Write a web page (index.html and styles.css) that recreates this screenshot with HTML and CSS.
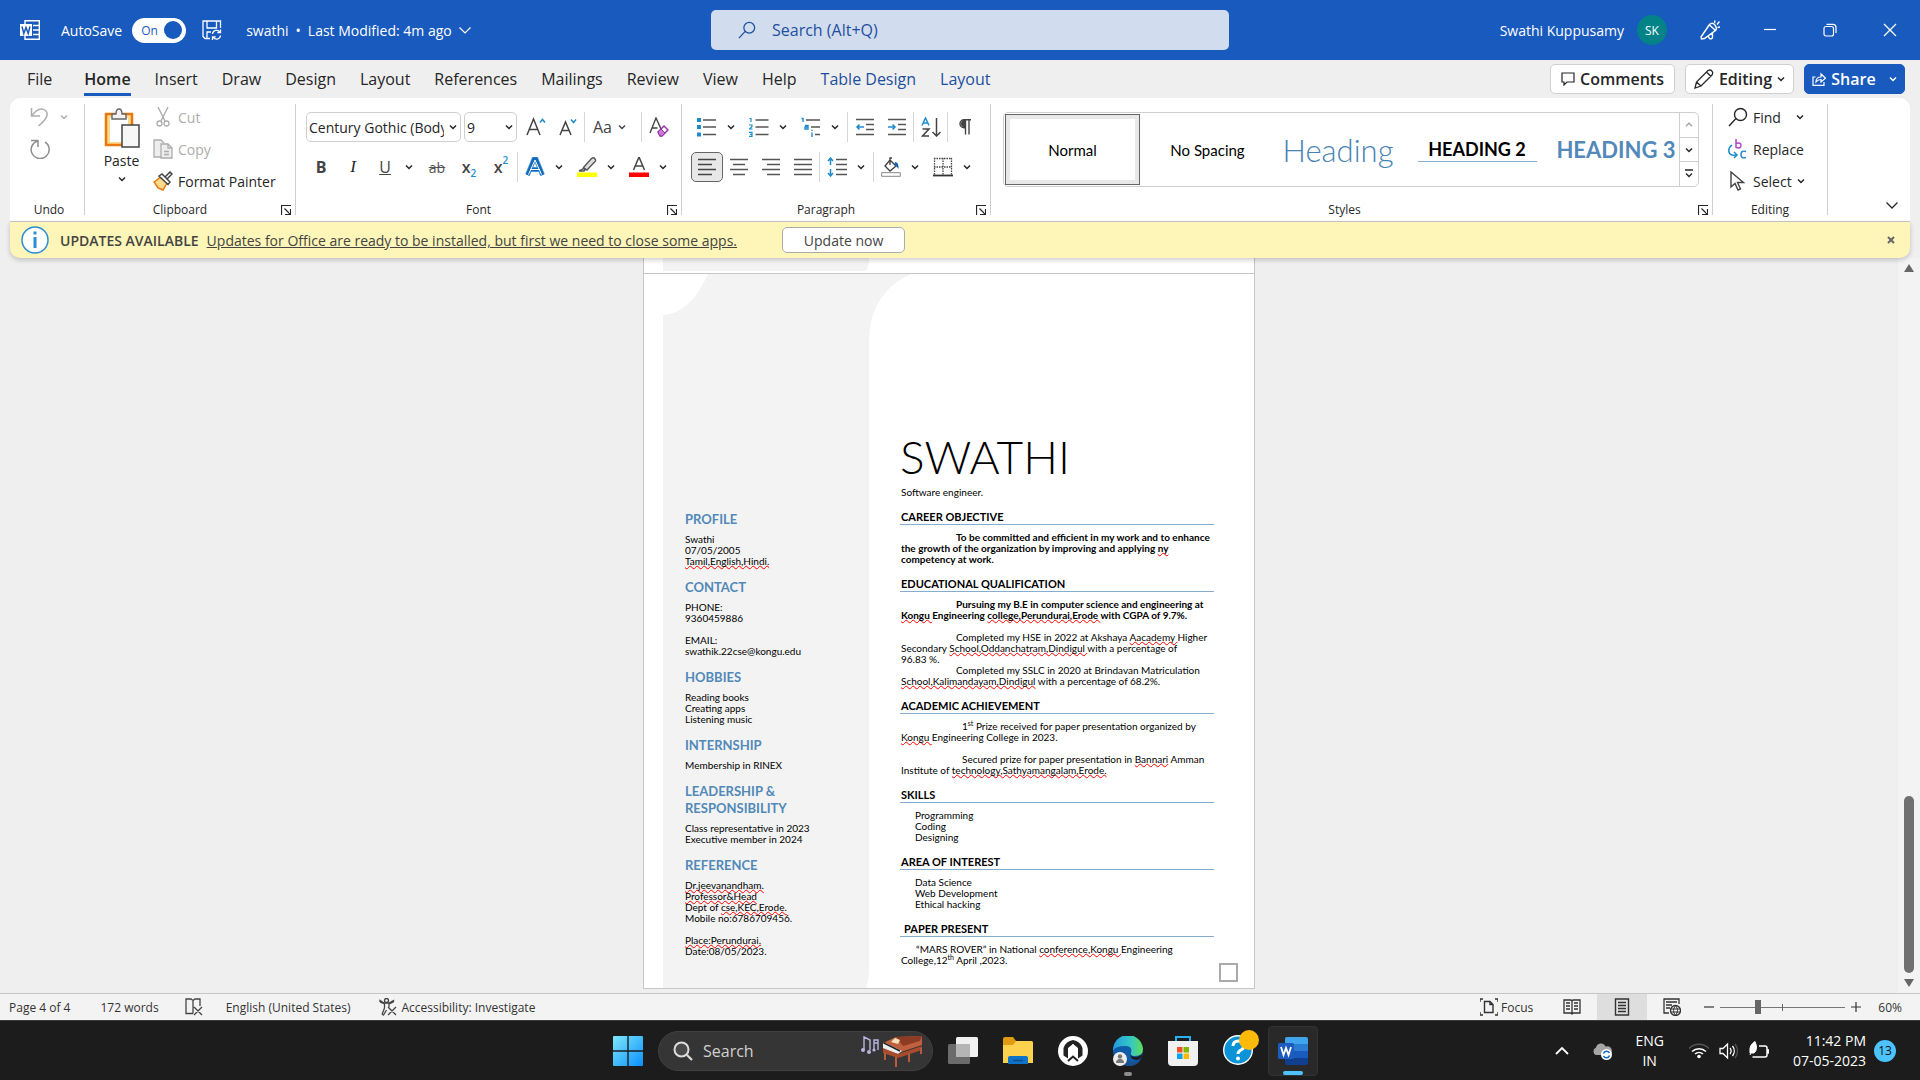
FILE: index.html
```html
<!DOCTYPE html>
<html lang="en">
<head>
<meta charset="utf-8">
<title>swathi - Word</title>
<link rel="stylesheet" href="styles.css">
</head>
<body>
<svg class="defs" aria-hidden="true">
  <symbol id="chev" viewBox="0 0 8 8"><path d="M1 2.5l3 3 3-3" fill="none" stroke="currentColor" stroke-width="1.5"/></symbol>
  <symbol id="launch" viewBox="0 0 10 10"><path d="M.5 10V.5H10M3.5 3.500l5.500 5.500M9.500 4v5.500H4" fill="none" stroke="currentColor" stroke-width="1.200"/></symbol>
  <symbol id="lens" viewBox="0 0 20 20"><path d="M1 19l7-7.500" fill="none" stroke="currentColor" stroke-width="1.400"/><circle cx="12.500" cy="7.500" r="6" fill="none" stroke="currentColor" stroke-width="1.400"/></symbol>
</svg>

<header class="titlebar">
  <div class="title-left">
    <svg class="i20" viewBox="0 0 20 20"><path d="M5 4V.7h14.300v18.600H5V16M13 5.500h6M13 10h6M13 14.500h6" fill="none" stroke="#fff" stroke-width="1.400"/><path d="M0 4h12v12H0z" fill="#fff"/><path d="M2 6.500l1.800 7L6 7.500l2.200 6 1.800-7" fill="none" stroke="#185abd" stroke-width="1.500"/></svg>
    <label class="autosave">AutoSave
      <span class="toggle"><input type="checkbox" role="switch" checked><span class="knob">On</span></span>
    </label>
    <button class="plain save" aria-label="Save"><svg class="i20" viewBox="0 0 20 20"><path d="M8 18.500H3L1 16.500V1h17.500v7M5 1v7h9.500V1M5 18v-6h4" fill="none" stroke="#fff" stroke-width="1.300"/><path d="M10.500 14a4 4 0 0 1 7.500-1.500M18.500 9.500v3.200h-3.200M18.500 15.500a4 4 0 0 1-7.500 1.500M10.500 20v-3.200h3.200" fill="none" stroke="#fff" stroke-width="1.300"/></svg></button>
    <button class="plain docname"><span>swathi</span><span>•</span><span>Last Modified: 4m ago</span><svg class="i12" viewBox="0 0 12 12"><path d="M.5 3.500L6 9l5.500-5.500" fill="none" stroke="#fff" stroke-width="1.200"/></svg></button>
  </div>
  <label class="searchbox"><svg class="i18"><use href="#lens"/></svg><input type="search" placeholder="Search (Alt+Q)" aria-label="Search"></label>
  <div class="title-right">
    <span>Swathi Kuppusamy</span>
    <span class="avatar">SK</span>
    <button class="plain win" aria-label="Coming soon"><svg class="i20" viewBox="0 0 20 20"><path d="M1 17L9.500 4.500Q12 2 14.500 4.500T16 10L4.500 18.500 1.500 19zM9.500 5l6.500 6M8 16l1.500 2.500q2.500 1 3-1V13M14.500 3l.5-2.500M17 4.500l2.500-3M17.500 7.500l2.500-.5" fill="none" stroke="#fff" stroke-width="1.400"/></svg></button>
    <button class="plain win" aria-label="Minimize"><svg class="i14" viewBox="0 0 14 14"><path d="M1 6.500h12" stroke="#fff" stroke-width="1.200"/></svg></button>
    <button class="plain win" aria-label="Restore"><svg class="i14" viewBox="0 0 14 14"><rect x="1" y="3.500" width="9.500" height="9.500" rx="2" fill="none" stroke="#fff" stroke-width="1.200"/><path d="M3.500 1.300H10a3 3 0 0 1 3 3V10" fill="none" stroke="#fff" stroke-width="1.200"/></svg></button>
    <button class="plain win" aria-label="Close"><svg class="i14" viewBox="0 0 14 14"><path d="M1 1l12 12M13 1L1 13" stroke="#fff" stroke-width="1.300"/></svg></button>
  </div>
</header>

<nav class="tabs">
  <a class="file" href="#">File</a><a class="active" href="#">Home</a><a href="#">Insert</a><a href="#">Draw</a><a href="#">Design</a><a href="#">Layout</a><a href="#">References</a><a href="#">Mailings</a><a href="#">Review</a><a href="#">View</a><a href="#">Help</a><a class="ctx" href="#">Table Design</a><a class="ctx" href="#">Layout</a>
  <div class="tab-actions">
    <button class="pill comments"><svg class="i14" viewBox="0 0 14 14"><path d="M1 1h12v9H6l-3 3v-3H1z" fill="none" stroke="currentColor" stroke-width="1.200"/></svg>Comments</button>
    <button class="pill editing"><svg class="i20" viewBox="0 0 20 20"><path d="M1 19l1.500-6L14 1.500q3-1.500 4.500 1.500.5 1.500-.5 3L7 17zM12.500 3l4.500 4.500M2.500 13L7 17" fill="none" stroke="currentColor" stroke-width="1.300"/></svg>Editing<svg class="i8"><use href="#chev"/></svg></button>
    <button class="pill share"><svg class="i14" viewBox="0 0 14 14"><path d="M3.500 5H1v8.300h11V10" fill="none" stroke="currentColor" stroke-width="1.200"/><path d="M4 10q0-5 5-5V2l4.500 4.200L9 10V7.500q-3 0-5 2.500z" fill="none" stroke="currentColor" stroke-width="1.200"/></svg>Share<svg class="i8"><use href="#chev"/></svg></button>
  </div>
</nav>

<section class="ribbon">
  <div class="group undo">
    <div class="stack">
      <div class="srow off"><button class="plain" aria-label="Undo"><svg class="i20" viewBox="0 0 20 20"><path d="M1.500 1v8H10M2 8.500Q9-1 15.500 3.500q5.500 5-7 15.500" fill="none" stroke="currentColor" stroke-width="1.500"/></svg></button><svg class="i8"><use href="#chev"/></svg></div>
      <div class="srow redo"><button class="plain" aria-label="Repeat"><svg class="i20" viewBox="0 0 20 20"><path d="M1 1.500h7V8M7.500 2A9 9 0 1 0 15 3" fill="none" stroke="currentColor" stroke-width="1.500"/></svg></button></div>
    </div>
    <div class="foot"><span>Undo</span></div>
  </div>
  <div class="group clip">
    <div class="cols">
      <button class="plain paste"><svg class="pasteicon" viewBox="0 0 36 40"><path d="M2 6h26v31H2z" fill="#fbd98d" stroke="#e8780c" stroke-width="2.500"/><path d="M6 10h18v24H6z" fill="#fff"/><path d="M8 6h4q0-5 3-5t3 5h4v5H8z" fill="#f3f3f3" stroke="#666" stroke-width="1.400"/><path d="M18 17h17v22H18z" fill="#f7f7f7" stroke="#444" stroke-width="1.500"/></svg>Paste<svg class="i8"><use href="#chev"/></svg></button>
      <div class="stack">
        <button class="plain srow off"><svg class="i20" viewBox="0 0 20 20"><path d="M5 0l7 14M15 0L8 14" fill="none" stroke="currentColor" stroke-width="1.400"/><circle cx="6.500" cy="16.500" r="2.500" fill="none" stroke="currentColor" stroke-width="1.300"/><circle cx="13.500" cy="16.500" r="2.500" fill="none" stroke="currentColor" stroke-width="1.300"/></svg>Cut</button>
        <button class="plain srow off"><svg class="i20" viewBox="0 0 20 20"><path d="M8 18H1V1h7l3 3" fill="#eee" stroke="currentColor" stroke-width="1.300"/><path d="M8 5h7l4 4v10H8zM15 5v4h4M11 12.500h5M11 15.500h5" fill="#eee" stroke="currentColor" stroke-width="1.300"/></svg>Copy</button>
        <button class="plain srow"><svg class="i20" viewBox="0 0 20 20"><path d="M1 11l7-5 6 6-4 7-5-2z" fill="#fbd98d" stroke="#e8780c" stroke-width="1.500"/><path d="M6 5l3-2 8 8-2 2.500zM12 6l5-5 2 2-5 5" fill="#fff" stroke="#444" stroke-width="1.500"/></svg>Format Painter</button>
      </div>
    </div>
    <div class="foot"><span>Clipboard</span><button class="plain" aria-label="Clipboard options"><svg class="i10"><use href="#launch"/></svg></button></div>
  </div>
  <div class="group font">
    <div class="row">
      <span class="combo name"><select aria-label="Font"><option>Century Gothic (Body)</option></select><svg class="i8"><use href="#chev"/></svg></span>
      <span class="combo size"><select aria-label="Font size"><option>9</option></select><svg class="i8"><use href="#chev"/></svg></span>
      <button class="plain ib" aria-label="Grow font"><svg class="i20" viewBox="0 0 20 20"><path d="M1 18L7.500 2 14 18M3.500 12.500h8" fill="none" stroke="#444" stroke-width="1.500"/><path d="M14 5.500l2.500-3 2.500 3" fill="none" stroke="#1e8bcd" stroke-width="1.500"/></svg></button>
      <button class="plain ib" aria-label="Shrink font"><svg class="i20" viewBox="0 0 20 20"><path d="M2 18L7.500 5 13 18M4 13.500h7" fill="none" stroke="#444" stroke-width="1.500"/><path d="M13 2.500l2.500 3 2.500-3" fill="none" stroke="#1e8bcd" stroke-width="1.500"/></svg></button>
      <i class="sep"></i>
      <button class="plain aa">Aa<svg class="i8"><use href="#chev"/></svg></button>
      <i class="sep"></i>
      <button class="plain ib" aria-label="Clear formatting"><svg class="i20" viewBox="0 0 20 20"><path d="M1 16L7 1l5 11M3.500 11h5" fill="none" stroke="#444" stroke-width="1.400"/><path d="M9 15l6-6 4 4-6 6h-2z" fill="#fff" stroke="#9b2fae" stroke-width="1.500"/><path d="M9 15l3-3 4 4-3 3h-2z" fill="#c57fd0" stroke="#9b2fae"/></svg></button>
    </div>
    <div class="row">
      <button class="plain ib b">B</button><button class="plain ib it">I</button><button class="plain ib un">U</button><svg class="ch"><use href="#chev"/></svg>
      <button class="plain ib st">ab</button><button class="plain ib x">x<sub>2</sub></button><button class="plain ib x">x<sup>2</sup></button>
      <i class="sep"></i>
      <button class="plain ib" aria-label="Text effects"><svg class="i20" viewBox="0 0 20 20"><path d="M2.500 18L9 2h2l6.500 16M5 12.500h10" fill="none" stroke="#5ba6e0" stroke-width="5"/><path d="M2.500 18L9 2h2l6.500 16M5 12.500h10" fill="none" stroke="#1468b8" stroke-width="3.500"/><path d="M3.500 17.500L10 3l6.500 14.500M5 12.500h10" fill="none" stroke="#fff" stroke-width="1"/></svg></button><svg class="ch"><use href="#chev"/></svg>
      <button class="plain ib" aria-label="Highlight"><svg class="i20" viewBox="0 0 20 20"><path d="M0 15.500h20V20H0z" fill="#ff0"/><path d="M4 13l2.500-1.500L8 13l-1 1H2zM6.500 10.500L14.500 1.500q2-1.500 3.500.5t-.5 3L10 13z" fill="#ddd" stroke="#555" stroke-width="1.400"/></svg></button><svg class="ch"><use href="#chev"/></svg>
      <button class="plain ib" aria-label="Font color"><svg class="i20" viewBox="0 0 20 20"><path d="M0 15.500h20V20H0z" fill="red"/><path d="M4.500 13L10 0l5.500 13M6.500 9h7" fill="none" stroke="#444" stroke-width="1.500"/></svg></button><svg class="ch"><use href="#chev"/></svg>
    </div>
    <div class="foot"><span>Font</span><button class="plain" aria-label="Font options"><svg class="i10"><use href="#launch"/></svg></button></div>
  </div>
  <div class="group para">
    <div class="row">
      <button class="plain ib" aria-label="Bullets"><svg class="i20" viewBox="0 0 20 20"><path d="M6 3h13M6 10h13M6 17.500h13" stroke="#555" stroke-width="1.600"/><path d="M0 1h4v4H0zM0 8h4v4H0zM0 15.500h4v4H0z" fill="#1e8bcd"/></svg></button><svg class="ch"><use href="#chev"/></svg>
      <button class="plain ib" aria-label="Numbering"><svg class="i20" viewBox="0 0 20 20"><path d="M6.500 3h13M6.500 10h13M6.500 17.500h13" stroke="#555" stroke-width="1.600"/><path d="M.5 1.500H2V5M0 8h3v1.500L.5 12h3M0 15.300h3v4H0M1 17.300h2" fill="none" stroke="#1e8bcd" stroke-width="1.200"/></svg></button><svg class="ch"><use href="#chev"/></svg>
      <button class="plain ib" aria-label="Multilevel list"><svg class="i20" viewBox="0 0 20 20"><path d="M5 3h14M10 10h9M14 17.500h5" stroke="#555" stroke-width="1.600"/><path d="M.5 1.500H2V5M4 8.500h3V12H4v-2h3M11 15.500V20M11 12.800v1.200" fill="none" stroke="#1e8bcd" stroke-width="1.400"/></svg></button><svg class="ch"><use href="#chev"/></svg>
      <i class="sep"></i>
      <button class="plain ib" aria-label="Decrease indent"><svg class="i20" viewBox="0 0 20 20"><path d="M1 2.500h18M11 7.500h8M11 12.500h8M1 17.500h18" stroke="#555" stroke-width="1.500"/><path d="M9 10H2M4.500 7.500L2 10l2.500 2.500" fill="none" stroke="#1e8bcd" stroke-width="1.500"/></svg></button><button class="plain ib" aria-label="Increase indent"><svg class="i20" viewBox="0 0 20 20"><path d="M1 2.500h18M11 7.500h8M11 12.500h8M1 17.500h18" stroke="#555" stroke-width="1.500"/><path d="M1 10h7M5.500 7.500L8 10l-2.500 2.500" fill="none" stroke="#1e8bcd" stroke-width="1.500"/></svg></button>
      <i class="sep"></i>
      <button class="plain ib" aria-label="Sort"><svg class="i20" viewBox="0 0 20 20"><path d="M1 8.500L4.500 1 8 8.500M2.500 6h4" fill="none" stroke="#1e8bcd" stroke-width="1.500"/><path d="M1.500 12H8l-6.500 7H8" fill="none" stroke="#444" stroke-width="1.500"/><path d="M15.500 1v18M11.500 15l4 4 4-4" fill="none" stroke="#444" stroke-width="1.500"/></svg></button>
      <i class="sep"></i>
      <button class="plain ib" aria-label="Show marks"><svg class="i20" viewBox="0 0 20 20"><path d="M16 2.700H9a4 4 0 0 0 0 8h1.500M10.500 3v14.500M14 3v14.500" fill="none" stroke="#444" stroke-width="1.400"/><path d="M10 3H8.500a4 4 0 0 0 0 7.500H10z" fill="#444"/></svg></button>
    </div>
    <div class="row">
      <button class="plain ib pressed" aria-label="Align left"><svg class="i20" viewBox="0 0 20 20"><path d="M1 2.500h18M1 7.500h14M1 12.500h18M1 17.500h14" stroke="#444" stroke-width="1.500"/></svg></button><button class="plain ib" aria-label="Center"><svg class="i20" viewBox="0 0 20 20"><path d="M1 2.500h18M4 7.500h12M1 12.500h18M4 17.500h12" stroke="#555" stroke-width="1.500"/></svg></button><button class="plain ib" aria-label="Align right"><svg class="i20" viewBox="0 0 20 20"><path d="M1 2.500h18M6 7.500h13M1 12.500h18M6 17.500h13" stroke="#555" stroke-width="1.500"/></svg></button><button class="plain ib" aria-label="Justify"><svg class="i20" viewBox="0 0 20 20"><path d="M1 2.500h18M1 7.500h18M1 12.500h18M1 17.500h18" stroke="#555" stroke-width="1.500"/></svg></button>
      <i class="sep"></i>
      <button class="plain ib" aria-label="Line spacing"><svg class="i20" viewBox="0 0 20 20"><path d="M9 2.500h11M9 7.500h11M9 12.500h11M9 17.500h11" stroke="#555" stroke-width="1.500"/><path d="M3.500 1v7M1 4l2.500-3L6 4M3.500 12v7M1 16l2.500 3L6 16" fill="none" stroke="#1e8bcd" stroke-width="1.500"/></svg></button><svg class="ch"><use href="#chev"/></svg>
      <i class="sep"></i>
      <button class="plain ib" aria-label="Shading"><svg class="i20" viewBox="0 0 20 20"><path d="M.7 15.700h18.600v3.600H.7z" fill="#fff" stroke="#888"/><path d="M9 3l6 6-6 5-5-5zM9 8V1h2" fill="#fff" stroke="#444" stroke-width="1.400"/><path d="M14 5q4 0 3.500 7-2-3-4-4z" fill="#1468b8"/></svg></button><svg class="ch"><use href="#chev"/></svg>
      <button class="plain ib" aria-label="Borders"><svg class="i20" viewBox="0 0 20 20"><path d="M1 1.500h18M1 10h18M1.500 1v17M10 1v17M18.500 1v17" fill="none" stroke="#444" stroke-width="1.300" stroke-dasharray="1.500 1"/><path d="M0 18.500h20" stroke="#333" stroke-width="1.800"/></svg></button><svg class="ch"><use href="#chev"/></svg>
    </div>
    <div class="foot"><span>Paragraph</span><button class="plain" aria-label="Paragraph options"><svg class="i10"><use href="#launch"/></svg></button></div>
  </div>
  <div class="group styles">
    <div class="gallery">
      <button class="plain s-normal">Normal</button>
      <button class="plain s-nosp">No Spacing</button>
      <button class="plain s-h1">Heading</button>
      <button class="plain s-h2"><span>HEADING 2</span></button>
      <button class="plain s-h3">HEADING 3</button>
      <div class="gscroll">
        <button class="plain up" aria-label="Up"><svg class="i8"><use href="#chev"/></svg></button>
        <button class="plain" aria-label="Down"><svg class="i8"><use href="#chev"/></svg></button>
        <button class="plain" aria-label="More"><svg class="i10" viewBox="0 0 10 10"><path d="M1 1h8M2 4.500l3 3 3-3" fill="none" stroke="currentColor" stroke-width="1.400"/></svg></button>
      </div>
    </div>
    <div class="foot"><span>Styles</span><button class="plain" aria-label="Styles options"><svg class="i10"><use href="#launch"/></svg></button></div>
  </div>
  <div class="group edit">
    <div class="stack">
      <button class="plain srow"><svg class="i20"><use href="#lens"/></svg>Find<svg class="i8 far"><use href="#chev"/></svg></button>
      <button class="plain srow"><svg class="i20" viewBox="0 0 20 20"><path d="M8 0v9M8 4.500q5-1.500 5 2t-5 2" fill="none" stroke="#b146c2" stroke-width="1.500"/><path d="M18 12.500q-5-1.500-5 3t5 3M4 6q-4 3-3 7 1 4 7 3M6 13l3 3-3 3" fill="none" stroke="#1e8bcd" stroke-width="1.500"/></svg>Replace</button>
      <button class="plain srow"><svg class="i20" viewBox="0 0 20 20"><path d="M3 1v15l4-3.500 3 6.500 2.500-1.200-3-6.300h6z" fill="#fff" stroke="#444" stroke-width="1.400"/></svg>Select<svg class="i8"><use href="#chev"/></svg></button>
    </div>
    <div class="foot"><span>Editing</span></div>
  </div>
  <button class="plain collapse" aria-label="Collapse ribbon"><svg class="i12" viewBox="0 0 12 12"><path d="M.5 3.500L6 9l5.500-5.500" fill="none" stroke="currentColor" stroke-width="1.300"/></svg></button>
</section>

<div class="update">
  <svg class="info" viewBox="0 0 28 28"><circle cx="14" cy="14" r="13" fill="#fff" stroke="#2a8dd4" stroke-width="1.500"/><path d="M14 11v11" stroke="#2a8dd4" stroke-width="3"/><path d="M14 5.500v3" stroke="#2a8dd4" stroke-width="3"/></svg>
  <strong>UPDATES AVAILABLE</strong>
  <a href="#">Updates for Office are ready to be installed, but first we need to close some apps.</a>
  <button class="upd">Update now</button>
  <button class="plain x-close" aria-label="Dismiss"><svg class="i8" viewBox="0 0 8 8"><path d="M1 1l6 6M7 1L1 7" stroke="#666" stroke-width="2"/></svg></button>
</div>

<main class="canvas">
  <div class="pages">
    <div class="prev"><div class="prev-side"></div></div>
    <article class="page">
      <svg class="shape" viewBox="0 0 248 714" aria-hidden="true"><path d="M45 0Q27 40 0 41V714H203Q206 706 206 698V64Q208 18 248 0Z" fill="#f3f3f3"/></svg>
      <aside class="side">
        <h2>PROFILE</h2>
        <p>Swathi<br>07/05/2005<br><u>Tamil,English,Hindi.</u></p>
        <h2>CONTACT</h2>
        <p>PHONE:<br>9360459886<br><br>EMAIL:<br>swathik.22cse@kongu.edu</p>
        <h2>HOBBIES</h2>
        <p>Reading books<br>Creating apps<br>Listening music</p>
        <h2>INTERNSHIP</h2>
        <p>Membership in RINEX</p>
        <h2>LEADERSHIP &amp;<br>RESPONSIBILITY</h2>
        <p>Class representative in 2023<br>Executive member in 2024</p>
        <h2>REFERENCE</h2>
        <p><u>Dr.jeevanandham.</u><br><u>Professor&amp;Head</u><br>Dept of <u>cse,KEC,Erode.</u><br>Mobile no:6786709456.<br><br><u>Place:Perundurai.</u><br>Date:08/05/2023.</p>
      </aside>
      <div class="body">
        <h1>SWATHI</h1>
        <p class="role">Software engineer.</p>
        <h3>CAREER OBJECTIVE</h3>
        <p class="ind bold">To be committed and efficient in my work and to enhance<br>the growth of the organization by improving and applying <u>ny </u><br>competency at work.</p>
        <h3>EDUCATIONAL QUALIFICATION</h3>
        <div class="txt">
          <p class="ind bold">Pursuing my B.E in computer science and engineering at<br><u>Kongu </u>Engineering <u>college,Perundurai,Erode </u>with CGPA of 9.7%.<br><br></p>
          <p class="ind">Completed my HSE in 2022 at Akshaya <u>Aacademy </u>Higher<br>Secondary <u>School,Oddanchatram,Dindigul </u>with a percentage of<br>96.83 %.</p>
          <p class="ind">Completed my SSLC in 2020 at Brindavan Matriculation<br><u>School,Kalimandayam,Dindigul</u> with a percentage of 68.2%.</p>
        </div>
        <h3>ACADEMIC ACHIEVEMENT</h3>
        <div class="txt">
          <p class="ind more">1<sup>st</sup> Prize received for paper presentation organized by<br><u>Kongu </u>Engineering College in 2023.<br><br></p>
          <p class="ind more">Secured prize for paper presentation in <u>Bannari</u> Amman<br>Institute of <u>technology,Sathyamangalam,Erode.</u></p>
        </div>
        <h3>SKILLS</h3>
        <p class="in">Programming<br>Coding<br>Designing</p>
        <h3>AREA OF INTEREST</h3>
        <p class="in">Data Science<br>Web Development<br>Ethical hacking</p>
        <h3 class="sp">PAPER PRESENT</h3>
        <p class="first">“MARS ROVER” in National <u>conference,Kongu </u>Engineering<br>College,12<sup>th</sup> April ,2023.</p>
      </div>
      <span class="handle"></span>
    </article>
  </div>
  <div class="scroll">
    <svg class="arrow" viewBox="0 0 12 10"><path d="M6 1l5 8H1z" fill="#666"/></svg>
    <span class="thumb"></span>
    <svg class="arrow" viewBox="0 0 12 10"><path d="M6 9l5-8H1z" fill="#666"/></svg>
  </div>
</main>

<footer class="status">
  <span>Page 4 of 4</span><span class="wd">172 words</span>
  <svg class="i18 proof" viewBox="0 0 18 18"><path d="M8 15.500H1V1h5l2 1.500L10 1h5v7M8 2.500v13M9 9l8 8M17 9l-8 8" fill="none" stroke="#444" stroke-width="1.300"/></svg>
  <span class="lang">English (United States)</span>
  <svg class="i18" viewBox="0 0 18 18"><circle cx="7.500" cy="2.500" r="2" fill="none" stroke="#444" stroke-width="1.300"/><path d="M1 4l4.500 2v4L3 16.500M14.500 4L10 6v3M3 16.500l1.500.5L7.500 12M9 9l8 8M17 9l-8 8M1 4V2.500L5 5h5l4.500-2.500V4" fill="none" stroke="#444" stroke-width="1.300"/></svg>
  <span class="acc">Accessibility: Investigate</span>
  <div class="views">
    <button class="plain focus"><svg class="i18" viewBox="0 0 18 18"><path d="M0 4V1h3M15 1h3v3M0 14v3h3M15 17h3v-3M4.500 3.500H10l3 3v8H4.500zM10 3.500v3h3" fill="none" stroke="#333" stroke-width="1.400"/></svg>Focus</button>
    <button class="plain view" aria-label="Read mode"><svg class="i18" viewBox="0 0 18 18"><path d="M1 2h7l1 1 1-1h7v13h-7l-1 1-1-1H1zM9 3v13M3 5h4M3 8h4M3 11h4M11 5h4M11 8h4M11 11h4" fill="none" stroke="#333" stroke-width="1.300"/></svg></button>
    <button class="plain view on" aria-label="Print layout"><svg class="i18" viewBox="0 0 18 18"><path d="M2.500 1h13v16h-13zM5 4.500h8M5 7.500h8M5 10.500h8M5 13.500h8" fill="none" stroke="#333" stroke-width="1.400"/></svg></button>
    <button class="plain view" aria-label="Web layout"><svg class="i18" viewBox="0 0 18 18"><path d="M6 15H1V1h15v5M3 4h11M3 7h6M3 10h4" fill="none" stroke="#333" stroke-width="1.300"/><circle cx="12.500" cy="12.500" r="5" fill="#f3f3f3" stroke="#333" stroke-width="1.300"/><path d="M7.500 11h10M7.500 14h10M12.500 7.500q-4 5 0 10M12.500 7.500q4 5 0 10" fill="none" stroke="#333"/></svg></button>
    <button class="plain zoomb" aria-label="Zoom out"><svg class="i10" viewBox="0 0 10 10"><path d="M0 5h10" stroke="#333" stroke-width="1.200"/></svg></button>
    <input class="zoom" type="range" min="10" max="190" value="63" aria-label="Zoom">
    <button class="plain zoomb" aria-label="Zoom in"><svg class="i10" viewBox="0 0 10 10"><path d="M0 5h10M5 0v10" stroke="#333" stroke-width="1.200"/></svg></button>
    <span class="pct">60%</span>
  </div>
</footer>

<div class="taskbar">
  <div class="apps">
    <button class="plain app" aria-label="Start"><svg class="i30" viewBox="0 0 30 30"><defs><linearGradient id="wg" x2="1" y2="1"><stop stop-color="#7ee8fd"/><stop offset="1" stop-color="#0a8ffb"/></linearGradient></defs><path d="M0 1q0-1 1-1h13.300v14.300H0zM15.700 0H29q1 0 1 1v13.300H15.700zM0 15.700h14.300V30H1q-1 0-1-1zM15.700 15.700H30V29q0 1-1 1H15.700z" fill="url(#wg)"/></svg></button>
    <label class="tsearch"><svg class="i20" viewBox="0 0 20 20"><circle cx="8.500" cy="8.500" r="7" fill="#4a4a4a" stroke="#ddd" stroke-width="2"/><path d="M14 14l5 5" stroke="#ddd" stroke-width="2.200"/></svg><input type="search" placeholder="Search" aria-label="Windows search">
      <svg class="piano" viewBox="0 0 62 32"><path d="M3 15V2l6 3v10M13 15V5h4v10M13 8h4" fill="none" stroke="#b9b4e0" stroke-width="1.400"/><circle cx="2" cy="15" r="2" fill="#b9b4e0"/><circle cx="8" cy="17" r="2" fill="#b9b4e0"/><circle cx="13" cy="15" r="1.600" fill="#b9b4e0"/><path d="M22 8L35 2l26-1v9l-24 8-15-4z" fill="#c0603f"/><path d="M35 2l26-1-2 5-17 5z" fill="#8c3b24"/><path d="M22 9l3-1 16 8-4 3-15-5z" fill="#eee"/><path d="M23 8l16 8" stroke="#222" stroke-width="1.500"/><path d="M22 13l15 6 24-8v4l-24 8-15-5z" fill="#a94c2d"/><path d="M24 18v7M35 22v10M48 19v8M60 13v6" stroke="#b95c3c" stroke-width="2"/><path d="M30 7l4-4 5 2-2 4z" fill="#f5e3bd"/></svg></label>
    <button class="plain app" aria-label="Task view"><svg class="i30" viewBox="0 0 30 30"><rect x="0" y="8" width="22" height="20" rx="1.500" fill="#6b6b6b"/><rect x="8" y="1" width="22" height="20" rx="1.500" fill="#f0f0f0"/><path d="M8 8h14v13H8z" fill="#b5b5b5"/></svg></button>
    <button class="plain app" aria-label="File Explorer"><svg class="i30" viewBox="0 0 30 30"><path d="M0 3q0-2 2-2h8l3 4h15q2 0 2 2v6H0z" fill="#e09b12"/><path d="M0 9h10l3-4h15q2 0 2 2v20H0z" fill="#fdd04e"/><path d="M5 28v-6q0-2 2-2h16q2 0 2 2v6z" fill="#0f73c9"/><path d="M10 24.500h10" stroke="#0a4f94" stroke-width="1.500"/></svg></button>
    <button class="plain app" aria-label="Audio control"><svg class="i30" viewBox="0 0 30 30"><circle cx="15" cy="15" r="15" fill="#fff"/><path d="M5.500 19.500V12Q8 5 15 4q7 1 9.500 8v7.500l-4.500 3V12l-5-4-5 4v10.500z" fill="#222"/><path d="M15 8v14" stroke="#fff" stroke-width="1"/><path d="M12.500 12l2.500-2 2.500 2v9L15 19l-2.500 2z" fill="#fff"/><path d="M10 25l5-4.500 5 4.500" fill="none" stroke="#222" stroke-width="2"/></svg></button>
    <button class="plain app" aria-label="Edge"><svg class="i30" viewBox="0 0 30 30"><defs><linearGradient id="eg" x2="1"><stop stop-color="#1f9be0"/><stop offset=".6" stop-color="#35c8c3"/><stop offset="1" stop-color="#63dd57"/></linearGradient></defs><circle cx="15" cy="15" r="15" fill="#0f5ca8"/><path d="M0 15A15 15 0 0 1 30 13q0 7-8 7-5 0-4-3 2-7-6-7Q2 10 0 15z" fill="url(#eg)"/><path d="M12 14q-3 8 5 12 6 1 11-3-4 8-14 7Q6 24 12 14z" fill="#1b4f8f"/><path d="M18 17q-1 4 5 4 5-1 7-4-1 6-6 7-8 0-6-7z" fill="#1c1c1c"/><circle cx="7" cy="23" r="7" fill="#eee"/><circle cx="7" cy="20.500" r="2.200" fill="#777"/><path d="M3 27q0-4 4-4t4 4z" fill="#777"/></svg><span class="dot"></span></button>
    <button class="plain app" aria-label="Store"><svg class="i30" viewBox="0 0 30 30"><path d="M8 6V1h14v5" fill="none" stroke="#27b1f2" stroke-width="2"/><path d="M0 5h30v21q0 4-4 4H4q-4 0-4-4z" fill="#f1f1f1"/><path d="M9 11h5.500v5.500H9z" fill="#f25022"/><path d="M15.500 11H21v5.500h-5.500z" fill="#7fba00"/><path d="M9 17.500h5.500V23H9z" fill="#00a4ef"/><path d="M15.500 17.500H21V23h-5.500z" fill="#ffb900"/></svg></button>
    <button class="plain app" aria-label="Get help"><svg class="help" viewBox="0 0 36 36"><circle cx="15" cy="20" r="14.300" fill="#0a93d6" stroke="#fff" stroke-width="1.400"/><path d="M10 16q0-5 5.500-5t5.500 4.500q0 3-3 4.500-3 1.500-3 4" fill="none" stroke="#fff" stroke-width="3"/><circle cx="15" cy="28.500" r="2" fill="#fff"/><circle cx="26" cy="10" r="10" fill="#fcbb0b"/></svg></button>
    <button class="plain app current" aria-label="Word"><svg class="i30" viewBox="0 0 30 30"><path d="M7 3q0-2 2-2h19q2 0 2 2v5H7z" fill="#41a5ee"/><path d="M7 8h23v7H7z" fill="#2b7cd3"/><path d="M7 15h23v7H7z" fill="#185abd"/><path d="M7 22h23v5q0 2-2 2H9q-2 0-2-2z" fill="#103f91"/><rect y="7" width="16" height="16" rx="1.500" fill="#1b5cbe"/><path d="M3 11l2.500 8L8 12l2.500 7 2.500-8" fill="none" stroke="#fff" stroke-width="1.800"/></svg><span class="dot"></span></button>
  </div>
  <div class="tray">
    <svg class="i14" viewBox="0 0 14 14"><path d="M1 10l6-6 6 6" fill="none" stroke="#fff" stroke-width="1.800"/></svg>
    <svg class="i20 cloud" viewBox="0 0 20 20"><path d="M4 14a4 4 0 0 1 0-7.500 5 5 0 0 1 9.500-1A4.500 4.500 0 0 1 17 14z" fill="#a5a5a5"/><circle cx="14.500" cy="13.500" r="5.500" fill="#fff"/><path d="M11.500 12.500a3.200 3.200 0 0 1 6-.500M17.500 14.500a3.200 3.200 0 0 1-6 .5" fill="none" stroke="#1468c8" stroke-width="1.500"/></svg>
    <span class="kb">ENG<br>IN</span>
    <svg class="i20" viewBox="0 0 20 20"><path d="M0 7.500a14 14 0 0 1 20 0" fill="none" stroke="#555" stroke-width="1.500"/><path d="M3 10.500a10 10 0 0 1 14 0M6 13a6 6 0 0 1 8 0" fill="none" stroke="#fff" stroke-width="1.500"/><circle cx="10" cy="15.500" r="1.800" fill="#fff"/></svg>
    <svg class="i20 vol" viewBox="0 0 20 20"><path d="M1 7.500h3L8.500 3v14L4 12.500H1z" fill="none" stroke="#fff" stroke-width="1.300"/><path d="M11 7a5 5 0 0 1 0 6M13.500 5a8 8 0 0 1 0 10" fill="none" stroke="#fff" stroke-width="1.300"/><path d="M16 3a11 11 0 0 1 0 14" fill="none" stroke="#555" stroke-width="1.300"/></svg>
    <svg class="i20" viewBox="0 0 20 20"><path d="M10 5h6q2 0 2 2v7q0 2-2 2H3.500M18.500 9v3h1V9z" fill="none" stroke="#fff" stroke-width="1.500"/><path d="M1 11Q0 4 6 .5q3.500 8-1 11.500H1zM3 9l-2 5" fill="#fff" stroke="#fff"/></svg>
    <span class="clock">11:42 PM<br>07-05-2023</span>
    <span class="badge">13</span>
  </div>
</div>
</body>
</html>
```
FILE: styles.css
```css
* { box-sizing: border-box; }
body { margin: 0; height: 100vh; display: flex; flex-direction: column; overflow: hidden; background: #efefef; color: #262626; font: 14px "Open Sans", "Noto Sans", sans-serif; white-space: nowrap; }
svg { display: block; flex: none; }
.defs { position: absolute; width: 0; height: 0; }
button, input, select { font: inherit; color: inherit; }
a { color: inherit; text-decoration: none; }
.plain { background: none; border: 0; padding: 0; display: flex; align-items: center; }
.i8 { width: 8px; height: 8px; }
.i10 { width: 10px; height: 10px; }
.i12 { width: 12px; height: 12px; }
.i14 { width: 14px; height: 14px; }
.i18 { width: 18px; height: 18px; }
.i20 { width: 20px; height: 20px; }
.i30 { width: 30px; height: 30px; }

/* title bar */
.titlebar { flex: none; height: 60px; padding-left: 20px; background: #185abd; color: #fff; display: flex; align-items: center; }
.title-left, .title-right { flex: 1 1 0; display: flex; align-items: center; }
.title-right { justify-content: flex-end; }
.autosave { display: flex; align-items: center; gap: 10px; margin-left: 21px; }
.toggle { display: block; position: relative; width: 54px; height: 25px; background: #fff; border-radius: 13px; color: #185abd; font-size: 12px; }
.toggle input { position: absolute; inset: 0; opacity: 0; margin: 0; }
.knob { display: flex; align-items: center; justify-content: space-between; height: 25px; padding: 0 4px 0 9px; }
.knob::after { content: ""; width: 18px; height: 18px; border-radius: 50%; background: #185abd; }
.save { margin: 0 24px 0 16px; }
.docname { gap: 7px; }
.searchbox { flex: 0 1 518px; height: 40px; border-radius: 5px; background: #d1dcef; color: #1d4f9e; display: flex; align-items: center; gap: 16px; padding: 0 27px; }
.searchbox input { flex: 1; border: 0; background: none; padding: 0; font-size: 16px; outline: 0; }
.searchbox input::placeholder { color: #1d4f9e; opacity: 1; }
.avatar { width: 30px; height: 30px; margin: 0 13px; border-radius: 50%; background: #038387; font-size: 12px; display: flex; align-items: center; justify-content: center; }
.win { width: 60px; height: 60px; justify-content: center; }

/* tabs */
.tabs { flex: none; height: 38px; display: flex; align-items: center; gap: 24px; padding: 0 15px 0 27px; font-size: 16px; }
.tabs > a { line-height: 28px; border-bottom: 3px solid transparent; margin-top: 3px; }
.tabs .file { margin-right: 8px; }
.tabs .active { font-weight: 600; border-color: #185abd; }
.tabs .ctx { color: #1d4f9e; }
.tab-actions { margin-left: auto; display: flex; gap: 10px; }
.pill { height: 30px; border: 1px solid #d0d0d0; border-radius: 5px; background: #fff; font-weight: 600; display: flex; align-items: center; justify-content: center; gap: 5px; padding: 0; }
.comments { width: 125px; }
.editing { width: 109px; }
.share { width: 101px; background: #185abd; border-color: #185abd; color: #fff; }
.share .i8 { margin-left: 8px; }

/* ribbon */
.ribbon { flex: none; height: 124px; margin: 0 10px; background: #fff; border-radius: 10px 10px 0 0; border-bottom: 1px solid #c8c8c8; display: flex; }
.group { flex: none; margin: 6px 0; height: 111px; border-right: 1px solid #cfcfcf; display: flex; flex-direction: column; }
.undo { width: 75px; padding-left: 20px; }
.undo .foot { margin-left: -16px; }
.clip { width: 211px; }
.font { width: 386px; }
.para { width: 309px; }
.styles { flex: 1 1 0; min-width: 0; }
.edit { width: 115px; }
.foot { margin-top: auto; line-height: 10px; font-size: 12px; display: flex; }
.foot span { flex: 1; text-align: center; }
.foot button { width: 14px; }
.clip .foot span, .font .foot span, .para .foot span { padding-right: 6px; }
.stack { display: flex; flex-direction: column; gap: 4px; margin-top: -1px; }
.srow { height: 28px; display: flex; align-items: center; gap: 5px; }
.undo .srow { gap: 10px; }
.off { color: #adadad; }
.redo { color: #8f8f8f; }
.cols { display: flex; gap: 13px; padding-left: 18px; }
.paste { flex-direction: column; padding-top: 4px; width: 37px; }
.pasteicon { width: 36px; height: 40px; margin-bottom: 3px; }
.paste .i8 { margin-top: 5px; }
.row { display: flex; align-items: center; height: 30px; }
.font .row, .para .row { margin: 8px 0 2px 9px; }
.ib { width: 32px; height: 30px; justify-content: center; flex: none; }
.ch { width: 8px; height: 8px; margin: 0 8px 0 4px; }
.sep { width: 1px; height: 30px; margin-right: 1px; background: #d6d6d6; }
.combo { display: flex; align-items: center; height: 30px; border: 1px solid #cfcfcf; border-radius: 5px; padding: 0 3px 0 2px; }
.combo select { appearance: none; border: 0; background: none; padding: 0; flex: 1; min-width: 0; overflow: hidden; text-overflow: clip; }
.combo .i8 { margin-left: 5px; }
.name { width: 155px; margin: 0 3px 0 1px; }
.size { width: 53px; margin-right: 3px; }
.aa { width: 55px; padding-left: 7px; gap: 6px; font-size: 16px; color: #444; }
.b { font-weight: 700; font-size: 16px; color: #444; }
.it { font: italic 17px "Liberation Serif", serif; }
.un { text-decoration: underline; font-size: 16px; color: #444; }
.st { text-decoration: line-through; color: #555; }
.x { font-weight: 600; font-size: 16px; color: #444; }
.x sub, .x sup { font-size: 10px; color: #1e8bcd; }
.x sub { margin-top: 12px; }
.x sup { margin-bottom: 14px; }
.pressed { background: #e8e8e8; border: 1px solid #666; border-radius: 5px; }
.gallery { margin: 8px 13px 0 12px; height: 75px; border: 1px solid #cfcfcf; border-radius: 5px; display: flex; font-family: Lato, sans-serif; color: #000; }
.gallery > button { justify-content: center; width: 135px; flex: 0 0 auto; overflow: hidden; }
.gallery .s-normal { border: 1px solid #666; box-shadow: inset 0 0 0 4px #e8e8e8; margin: 1px 0 1px 1px; height: 71px; font-size: 15px; }
.gallery .s-nosp { font-size: 15px; }
.gallery .s-h1 { font-size: 31px; font-weight: 300; color: #4682b4; width: 126px; }
.gallery .s-h2 { font-size: 18px; font-weight: 700; width: 152px; }
.s-h2 span { border-bottom: 1px solid #84add0; width: 119px; line-height: 24px; }
.gallery .s-h3 { font-size: 22px; font-weight: 700; color: #5289b8; flex: 1 1 0; min-width: 0; }
.gscroll { width: 19px; border-left: 1px solid #cfcfcf; margin-left: auto; display: flex; flex-direction: column; }
.gscroll button { flex: 1; justify-content: center; color: #262626; }
.gscroll button + button { border-top: 1px solid #cfcfcf; }
.gscroll .up { color: #aaa; transform: rotate(180deg); }
.edit .stack { padding-left: 15px; }
.edit .far { margin-left: 10px; }
.collapse { flex: none; width: 82px; justify-content: flex-end; padding: 90px 12px 0 0; height: 123px; }

/* update message */
.update { flex: none; height: 36px; margin: 0 10px; padding: 0 15px 0 11px; background: #fdf6b8; border-radius: 0 0 10px 10px; box-shadow: 0 2px 5px rgba(0,0,0,.2); display: flex; align-items: center; z-index: 1; color: #444; }
.update strong { font-weight: 600; margin: 0 8px 0 11px; }
.update a { text-decoration: underline; }
.info { width: 28px; height: 28px; }
.upd { margin-left: 45px; width: 123px; height: 26px; border: 1px solid #ababab; border-radius: 5px; background: #fff; padding: 0; }
.x-close { margin-left: auto; }

/* document */
.canvas { flex: 1; min-height: 0; display: flex; overflow: hidden; }
.pages { flex: 1; display: flex; flex-direction: column; align-items: center; }
.prev, .page { width: 612px; border: 1px solid #c6c6c6; background: #fff; }
.prev { height: 15px; border-width: 0 1px; padding-left: 19px; flex: none; }
.prev-side { width: 206px; height: 13px; background: #f3f3f3; border-bottom-right-radius: 4px 12px; }
.page { position: relative; height: 716px; flex: none; display: flex; font-family: Lato, sans-serif; font-size: 10px; line-height: 11px; color: #000; }
.shape { position: absolute; left: 19px; top: 0; width: 248px; height: 714px; }
.side { position: relative; width: 256px; padding: 237px 0 0 41px; }
.page h1, .page h2, .page h3, .page p { margin: 0; }
.page u { text-decoration: underline wavy #f00 1px; text-underline-offset: 0; text-decoration-skip-ink: none; }
.side h2 { font-size: 13px; line-height: 17px; color: #5289b8; margin-bottom: 6px; }
.side p { margin-bottom: 12px; }
.body { position: relative; width: 314px; padding-top: 153px; }
.page h1 { font-size: 46px; line-height: 60px; font-weight: 300; }
.page .role { margin: 0 0 12px 1px; }
.body h3 { font-size: 11px; line-height: 14px; border-bottom: 1px solid #84add0; margin-bottom: 7px; padding-left: 1px; }
.body .sp { padding-left: 4px; }
.body > p, .txt { margin: 0 0 12px 1px; }
.body .ind { text-indent: 55px; }
.body .more { text-indent: 61px; }
.body .bold { font-weight: 700; }
.body .in { padding-left: 14px; }
.body .first { text-indent: 15px; }
.page sup { font-size: 7px; line-height: 0; }
.handle { position: absolute; right: 16px; bottom: 6px; width: 19px; height: 19px; border: 2px solid #aaa; background: #fff; }
.scroll { width: 22px; background: #f3f3f3; display: flex; flex-direction: column; align-items: center; padding: 5px 0; }
.arrow { width: 12px; height: 10px; }
.thumb { width: 10px; height: 177px; border-radius: 5px; background: #707070; margin: auto 0 5px; }

/* status bar */
.status { flex: none; height: 27px; border-top: 1px solid #c6c6c6; background: #f3f3f3; display: flex; align-items: center; font-size: 12px; padding: 0 18px 0 9px; color: #333; }
.wd { margin: 0 26px 0 30px; }
.proof { margin-right: 23px; }
.lang { margin-right: 29px; }
.acc { margin-left: 4px; }
.views { margin-left: auto; display: flex; align-items: center; }
.focus { gap: 3px; margin-right: 14px; }
.view { width: 50px; height: 26px; justify-content: center; }
.on { background: #dedede; }
.zoomb { margin: 0 6px; }
.zoom { appearance: none; width: 125px; height: 14px; margin: 0; background: linear-gradient(#666, #666) 50% 50% / 1px 7px no-repeat, linear-gradient(#777, #777) 50% 50% / 100% 1px no-repeat; }
.zoom::-webkit-slider-thumb { appearance: none; width: 6px; height: 14px; background: #666; }
.views .view + .zoomb { margin-left: 7px; }
.pct { margin-left: 11px; }

/* task bar */
.taskbar { flex: none; height: 60px; background: #1c1c1c; border-top: 1px solid #3a3a3a; color: #fff; display: grid; grid-template-columns: 1fr auto 1fr; align-items: center; padding-left: 1px; }
.apps { grid-column: 2; display: flex; gap: 5px; align-items: center; }
.app { position: relative; width: 50px; height: 50px; justify-content: center; border-radius: 4px; }
.current { background: #292929; border: 1px solid #333; }
.dot { position: absolute; left: 50%; bottom: 0; width: 8px; height: 4px; margin-left: -4px; border-radius: 2px; background: #8d8d8d; }
.current .dot { width: 20px; margin-left: -10px; background: #4cc2ff; }
.tsearch { width: 275px; height: 40px; border-radius: 20px; background: #353535; border: 1px solid #404040; display: flex; align-items: center; padding: 0 9px 0 14px; gap: 10px; }
.tsearch input { flex: 1; min-width: 0; border: 0; background: none; padding: 0; font-size: 16px; outline: 0; }
.tsearch input::placeholder { color: #d0d0d0; opacity: 1; }
.piano { width: 62px; height: 32px; }
.help { width: 36px; height: 36px; margin: -6px 0 0 6px; }
.tray { display: flex; align-items: center; justify-content: flex-end; padding-right: 24px; line-height: 20px; }
.cloud { margin: 0 23px; }
.kb { text-align: center; margin-right: 25px; }
.vol { margin: 0 10px; }
.clock { text-align: right; margin: 0 8px 0 24px; }
.badge { width: 22px; height: 22px; border-radius: 50%; background: #4cc2ff; color: #111; font-size: 12px; display: flex; align-items: center; justify-content: center; }
```
